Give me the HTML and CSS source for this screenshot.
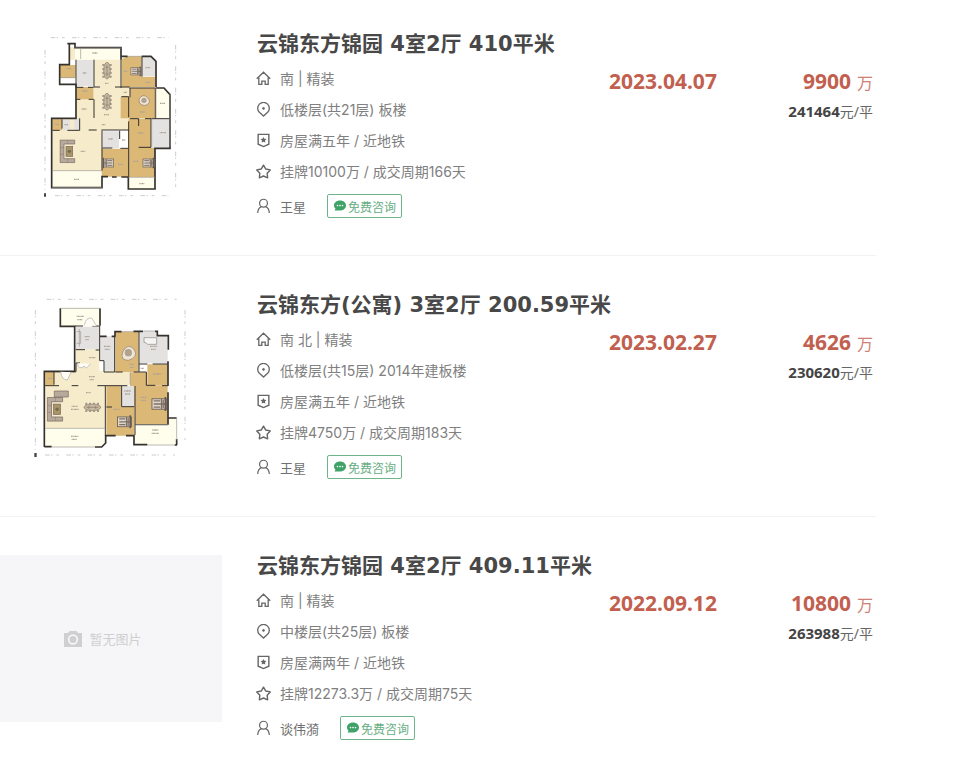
FILE: index.html
```html
<!DOCTYPE html>
<html lang="zh-CN">
<head>
<meta charset="utf-8">
<meta name="viewport" content="width=device-width, initial-scale=1">
<title>成交房源</title>
<link rel="stylesheet" href="styles.css">
</head>
<body>
<svg class="sprite" aria-hidden="true">
  <symbol id="home" viewBox="0 0 16 16"><path stroke-width="1.4" d="M.8 8.200 8 1.300l7.200 6.900M3 6.800V14.300h3.200v-3.500h3.600v3.500H13V6.800"/></symbol>
  <symbol id="pin" viewBox="0 0 16 16"><path stroke-width="1.4" d="M8 15 3.600 11A6.200 6.200 0 1 1 12.400 11Z"/><circle cx="8" cy="6.800" r="1" fill="currentColor"/></symbol>
  <symbol id="badge" viewBox="0 0 16 16"><path stroke-width="1.500" d="M2.300 1.500h11.400v10.500L8 14.500l-5.700-2.500Z"/><path d="m8 4.200 1 2 2.200.3-1.600 1.500.4 2.200L8 9.200l-2 1 .4-2.200-1.600-1.500 2.200-.3Z" fill="currentColor" stroke="none"/></symbol>
  <symbol id="star" viewBox="0 0 16 16"><path stroke-width="1.500" stroke-linejoin="round" d="m8 1.300 2.300 4 4.900 1-3.300 3.500.5 4.900L8 12.800l-4.400 1.900.5-4.900L.8 6.300l4.900-1Z"/></symbol>
  <symbol id="person" viewBox="0 0 16 16"><circle cx="8" cy="5" r="4.200" stroke-width="1.300"/><path stroke-width="1.300" d="M1.800 15.500c.2-3.400 1.800-5.900 4-6.800M14.200 15.500c-.2-3.400-1.800-5.900-4-6.800"/></symbol>
  <symbol id="chat" viewBox="0 0 14 14"><path d="M7 1.500c3.500 0 6 2.200 6 5s-2.500 5-6 5H1.600l.9-1.900C1.500 8.700 1 7.700 1 6.500c0-2.800 2.500-5 6-5Z" fill="currentColor" stroke="none"/><g fill="#fff" stroke="none"><circle cx="4.500" cy="6.600" r=".8"/><circle cx="7" cy="6.600" r=".8"/><circle cx="9.500" cy="6.600" r=".8"/></g></symbol>
  <symbol id="sofa" viewBox="0 0 50 72"><path d="M2 2h44v12H14v44h32v12H2Z" fill="#b8a99c" stroke="#75675f" stroke-width="2"/><path d="M2 25h12M2 45h12M25 2v12M25 58v12" stroke="#75675f"/><rect x="20" y="21" width="20" height="30" fill="#a99467" stroke="#75675f" stroke-width="2"/><circle cx="30" cy="36" r="5" fill="#756b4d"/></symbol>
  <symbol id="table" viewBox="0 0 36 60"><ellipse cx="18" cy="30" rx="10" ry="25" fill="#c9b9a0" stroke="#85796b" stroke-width="2"/><path d="M4 13h7M4 25h7M4 37h7M4 48h7M25 13h7M25 25h7M25 37h7M25 48h7" stroke="#a3978a" stroke-width="6"/><path d="M18 12v36M13 20h10M13 40h10" stroke="#85796b" stroke-width="2"/></symbol>
  <symbol id="bed" viewBox="0 0 40 34"><rect x="3" y="5" width="34" height="24" fill="#e0d6ca" stroke="#665a52" stroke-width="2"/><path d="M25 5v24M29 7v20M7 10h15M7 17h30M7 24h15" stroke="#7d7067" stroke-width="3"/><path d="M34 1v32" stroke="#665a52" stroke-width="4"/></symbol>
</svg>

<main class="list">
  <article class="item">
    <svg class="photo" viewBox="-90 24 666 501" role="img" aria-label="户型图">
      <g class="dims"><path d="M62 38h355M75 512h340M45 75v420M437 60v430"/></g>
      <path d="M42 505h6v10h-6z" fill="#444"/>
      <g fill="#f6ebca"><path d="M118 67h155v120h26v128h-83v122H65V282h73v-95h55V104h-75z"/></g>
      <g fill="#fffdec"><path d="M135 69h138v35H135zM66 438h149v50H66zM295 457h80v35h-80zM377 189h25l17 20v72h-42z"/></g>
      <g fill="#dcb877"><path d="M90 120h47v39H90zM275 103l18-9h42v93h-60zM335 155h42v32h-42zM140 186h50v37h-50zM272 216h28v64h-28zM300 189h77v91h-77zM296 281h67v87h12v88h-80zM215 371h79v84h-79zM67 283h29v33H67z"/></g>
      <g fill="#e4e2e0"><path d="M140 105h51v79h-51zM337 96h28l12 14v43h-40zM366 282h53v87h-53zM218 319h49v50h-49zM99 284h21v32H99zM133 281h16v35h-16z"/></g>
      <g class="wall"><path d="M112 56h23v12h138v36M118 57v62H89v59h49v102H65v36M65 316v172h151v-33h18M246 456h14M274 456h21v36h80v-36M275 94h18M335 94h28l15 15v77M378 189h24l18 20v161h-45v87"/></g>
      <g class="inner"><path d="M138 104v83h22M174 187h17M192 104v82h18M255 186h44M273 104v85M192 223v56M139 223h12M176 223h15M67 316h22M112 316h37v-36M96 283v28M176 315h24M214 315h83M216 317v120M269 317v25M217 369h30M271 370h24M296 289v166M298 189h79M300 189v28M274 215h22v62M300 281h26v22M345 281h18v86h-37M364 281h55M336 95v60M376 189v92"/></g>
      <g fill="none" stroke="#9a9894" stroke-width="2"><path d="M135 69h138M68 437h148M66 488h150M295 457h80M295 94h40M365 284v80M137 158H92M152 70v32M420 205v160M378 189v90"/></g>
      <use href="#table" x="213" y="107" width="36" height="60"/>
      <use href="#table" x="213" y="200" width="36" height="60"/>
      <use href="#sofa" x="88" y="343" width="50" height="72"/>
      <use href="#bed" x="300" y="123" width="36" height="32"/>
      <use href="#bed" x="336" y="397" width="40" height="34"/>
      <use href="#bed" x="-254" y="397" width="40" height="34" transform="scale(-1 1)"/>
      <path d="M327 222q12-18 26-4 13 14-5 23-22 2-21-19Z" fill="#eee5d6" stroke="#8d7967" stroke-width="2"/><circle cx="342" cy="226" r="8" fill="#b0a28e"/>
      <g class="labels"><path d="M187 84h15M109 131h15M158 144h12M157 198h15M225 175h10M222 269h15M281 139h12M346 128h15M346 172h15M281 202h10M390 235h15M330 261h14M155 252h14M215 299h12M323 324h17M389 323h20M235 342h14M276 345h10M103 299h12M76 298h12M152 379h14M132 463h16M264 418h15M309 409h17M328 476h15"/></g>
    </svg>
    <div class="info">
      <h2><a href="#">云锦东方锦园 4室2厅 410平米</a></h2>
      <p><svg><use href="#home"/></svg>南 | 精装</p>
      <p><svg><use href="#pin"/></svg>低楼层(共21层) 板楼</p>
      <p><svg><use href="#badge"/></svg>房屋满五年 / 近地铁</p>
      <p><svg><use href="#star"/></svg>挂牌10100万 / 成交周期166天</p>
      <div class="agent"><svg><use href="#person"/></svg><a href="#">王星</a><button type="button"><svg><use href="#chat"/></svg>免费咨询</button></div>
    </div>
    <time class="date" datetime="2023-04-07">2023.04.07</time>
    <div class="price"><div class="total"><b>9900</b>万</div><div class="unit"><b>241464</b>元/平</div></div>
  </article>

  <article class="item">
    <svg class="photo" viewBox="-60 27 666 501" role="img" aria-label="户型图">
      <g class="dims"><path d="M80 43h390M75 510h390M46 75v420M495 75v390"/></g>
      <path d="M43 504h7v12h-7z" fill="#444"/>
      <path fill="#f6ebca" d="M76 260h92v-67h70v64h90v43h-73v129H76z"/>
      <path fill="#fffdec" d="M122 70h119v53H122zM75 431h181v45l-12 10H75zM346 420h98v-21h26v81H346z"/>
      <path fill="#dcb877" d="M286 140h70v121h-70zM330 262h51v39h62v118h-98v-52h-15zM259 303h45v63h39v86h-84zM382 238h61v62h-61zM76 262h26v39H76z"/>
      <path fill="#e4e2e0" d="M168 125h69v68h-69zM241 154h42v103h-30v-31h-12zM359 138h47l12 14h25v83h-84zM307 303h36v62h-36z"/>
      <g class="wall"><path d="M121 70v54h43v135H73v227M240 70v52M73 485h22M225 486h20l12-12v-22h30M318 452h24v27h40M464 480h7M470 480v-18M470 399h-26M240 154h20M275 154h12M285 154v-14h20M340 139h29M405 139h7v13h33v42M444 229v74M444 322v97"/></g>
      <g class="inner"><path d="M165 123h24M217 123h22v72h-12M167 194h28M75 260h46M150 260h18v-26h12M102 261v38M75 302h42M155 302h20M232 302h90M256 303v149M239 195v32h13v34h32V155M286 261h22M341 261h38v40h27M426 302h18M357 140v120M357 237h25M398 237h45M305 303v62h37M345 303v147M345 419h99M259 366h17"/></g>
      <g fill="none" stroke="#9a9894" stroke-width="2"><path d="M122 70h118M76 430h180M95 486h130M382 480h82M470 400v66M304 140h38M370 138h36M178 132v53M330 262v37M170 140h12v35h-12M346 419h98"/></g>
      <path fill="#f4f4f4" stroke="#888" stroke-width="2" d="M372 158h38v20h-27l-8-6h-3z"/>
      <path d="M122 260q3 25 20 25l11-23M193 121q5-25 22-22l15 24M172 235q5 22 21 8 4 14 18-7" fill="#fffdf6" stroke="#aaa" stroke-width="2"/>
      <use href="#sofa" x="80" y="332" width="52" height="82"/>
      <path d="M103 318h42v18h-42z" fill="#b8a99c" stroke="#75675f" stroke-width="2"/>
      <g transform="rotate(90 217 367)"><use href="#table" x="195" y="337" width="44" height="60"/></g>
      <use href="#bed" x="392" y="333" width="52" height="48"/>
      <use href="#bed" x="289" y="386" width="49" height="49"/>
      <path d="M308 201q15-30 35-7 13 23-18 32-25 0-17-25Z" fill="#eee5d6" stroke="#8d7967" stroke-width="2"/><circle cx="325" cy="203" r="11" fill="#b0a28e"/>
      <g class="labels"><path d="M170 94h22M172 104h15M194 155h16M196 164h10M207 218h19M207 275h18M209 284h13M252 184h20M254 193h15M328 238h14M330 247h12M390 184h22M393 193h14M362 250h10M399 267h23M83 280h14M198 323h14M155 364h18M153 373h24M313 318h20M315 327h15M361 337h20M363 346h15M281 373h18M153 454h22M155 463h16M397 435h18M395 445h22"/></g>
    </svg>
    <div class="info">
      <h2><a href="#">云锦东方(公寓) 3室2厅 200.59平米</a></h2>
      <p><svg><use href="#home"/></svg>南 北 | 精装</p>
      <p><svg><use href="#pin"/></svg>低楼层(共15层) 2014年建板楼</p>
      <p><svg><use href="#badge"/></svg>房屋满五年 / 近地铁</p>
      <p><svg><use href="#star"/></svg>挂牌4750万 / 成交周期183天</p>
      <div class="agent"><svg><use href="#person"/></svg><a href="#">王星</a><button type="button"><svg><use href="#chat"/></svg>免费咨询</button></div>
    </div>
    <time class="date" datetime="2023-02-27">2023.02.27</time>
    <div class="price"><div class="total"><b>4626</b>万</div><div class="unit"><b>230620</b>元/平</div></div>
  </article>

  <article class="item">
    <div class="photo empty">
      <svg viewBox="0 0 18 16" aria-hidden="true"><path fill="currentColor" fill-rule="evenodd" d="M0 2h4l1.500-2h7L14 2h4v14H0ZM9 3.300a5.200 5.200 0 1 0 0 10.400A5.200 5.200 0 0 0 9 3.300Zm0 1.700a3.500 3.500 0 1 1 0 7 3.500 3.500 0 0 1 0-7Z"/><circle cx="9" cy="8.500" r="2" fill="currentColor"/></svg>
      <span>暂无图片</span>
    </div>
    <div class="info">
      <h2><a href="#">云锦东方锦园 4室2厅 409.11平米</a></h2>
      <p><svg><use href="#home"/></svg>南 | 精装</p>
      <p><svg><use href="#pin"/></svg>中楼层(共25层) 板楼</p>
      <p><svg><use href="#badge"/></svg>房屋满两年 / 近地铁</p>
      <p><svg><use href="#star"/></svg>挂牌12273.3万 / 成交周期75天</p>
      <div class="agent"><svg><use href="#person"/></svg><a href="#">谈伟漪</a><button type="button"><svg><use href="#chat"/></svg>免费咨询</button></div>
    </div>
    <time class="date" datetime="2022-09-12">2022.09.12</time>
    <div class="price"><div class="total"><b>10800</b>万</div><div class="unit"><b>263988</b>元/平</div></div>
  </article>
</main>
</body>
</html>
```
FILE: styles.css
```css
* { box-sizing: border-box; }

body {
  margin: 0;
  background: #fff;
  color: #808080;
  font-family: Inter, "Noto Sans CJK SC", sans-serif;
  font-size: 14px;
}

a { color: inherit; text-decoration: none; }

.sprite { position: absolute; width: 0; height: 0; }

.list { margin-right: 84px; }

.item {
  display: grid;
  grid-template-columns: 222px minmax(0, 1fr) 110px 154px;
  padding: 38px 3px 37px 0;
  border-bottom: 1px solid #f2f2f2;
}

.item:first-child { padding-top: 33px; }

.photo { width: 222px; height: 167px; }

.wall, .inner, .dims, .labels { fill: none; stroke: #35312d; }
.wall { stroke-width: 5px; }
.inner { stroke-width: 3px; }
.dims { stroke: #ccc; stroke-width: 3px; stroke-dasharray: 14 4 4 12 8 22; }
.labels { stroke: #aca395; stroke-width: 4px; stroke-dasharray: 3 1; }

.empty {
  display: flex;
  align-items: center;
  justify-content: center;
  gap: 7px;
  padding-right: 16px;
  background: #f6f6f8;
  color: #cfcfd1;
  font-size: 13px;
}

.empty svg { width: 18px; height: 16px; }

.info { padding-left: 35px; white-space: nowrap; }

h2 {
  margin: 0 0 8px;
  color: #484848;
  font-family: "DejaVu Sans", "Noto Sans CJK SC", sans-serif;
  font-size: 21px;
  font-weight: 600;
  line-height: 22px;
}

p {
  display: flex;
  align-items: center;
  margin: 0;
  line-height: 31px;
}

p svg, .agent > svg {
  width: 15px;
  height: 15px;
  margin-right: 9px;
  margin-left: -1px;
  fill: none;
  stroke: #666;
  color: #666;
}

.agent {
  display: flex;
  align-items: center;
  margin-top: 7px;
  font-size: 13px;
}

.agent > svg { height: 16px; }
.agent > a { color: #707070; }

button {
  display: flex;
  align-items: center;
  gap: 1px;
  height: 24px;
  margin-left: 21px;
  padding: 0 5px;
  border: 1px solid #6fb58c;
  border-radius: 2px;
  background: #fff;
  color: #67ae84;
  font-family: inherit;
  font-size: 12px;
}

button svg { width: 14px; height: 14px; color: #3fa266; }

.date, .total, .unit { font-family: "Noto Sans", "Noto Sans CJK SC", sans-serif; }

.date, .total {
  padding-top: 36px;
  color: #c2604f;
  font-size: 21px;
  font-weight: 700;
  line-height: 24px;
}

.price { text-align: right; }
.total { color: #cf8074; font-size: 16px; font-weight: 400; }
.total b { margin-right: 6px; color: #c2604f; font-size: 21px; }
.unit { margin-top: 4px; color: #666; font-size: 14px; line-height: 24px; }
.unit b { color: #444; font-size: 15px; }
```
